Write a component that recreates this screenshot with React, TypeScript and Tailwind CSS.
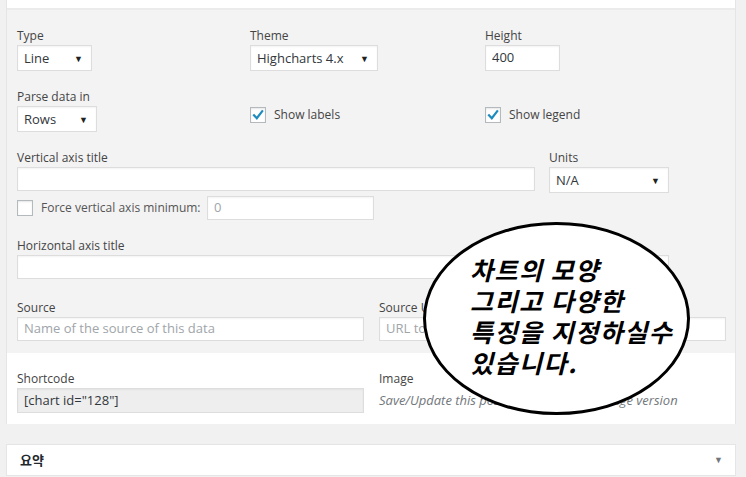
import React from 'react';

const Arrow = () => <span className="text-[9px] leading-none text-[#222]">▼</span>;

function Label({ children, className = '' }: { children?: React.ReactNode; className?: string }) {
  return <div className={`h-[18px] leading-[18px] text-[12px] text-[#444] ${className}`}>{children}</div>;
}

function Select({ value, w }: { value: string; w: string }) {
  return (
    <div className={`${w} h-[26px] bg-white border border-[#ddd] shadow-[inset_0_1px_2px_rgba(0,0,0,0.05)] flex items-center justify-between pl-[6px] pr-[8px] pt-[1px] text-[13px] text-[#32373c]`}>
      <span>{value}</span>
      <Arrow />
    </div>
  );
}

function Input({ w, value, placeholder, h = 'h-[24px]', bg = 'bg-white' }: { w: string; value?: string; placeholder?: string; h?: string; bg?: string }) {
  return (
    <div className={`${w} ${h} ${bg} border border-[#ddd] shadow-[inset_0_1px_2px_rgba(0,0,0,0.05)] flex items-center px-[6px] text-[13px]`}>
      {value ? <span className="text-[#32373c]">{value}</span> : <span className="text-[#a0a5aa]">{placeholder}</span>}
    </div>
  );
}

function Checkbox({ checked }: { checked?: boolean }) {
  return (
    <div className="w-[16px] h-[16px] shrink-0 bg-white border border-[#b4b9be] shadow-[inset_0_1px_2px_rgba(0,0,0,0.1)] flex items-center justify-center">
      {checked && (
        <svg width="14" height="14" viewBox="0 0 14 14">
          <path d="M3 7.2 L5.8 10.2 L11.2 3.2" fill="none" stroke="#1e8cbe" strokeWidth="2.2" strokeLinecap="square" />
        </svg>
      )}
    </div>
  );
}

export default function App() {
  return (
    <div className="relative w-[746px] h-[477px] overflow-hidden bg-[#f1f1f1] font-['Open_Sans','Liberation_Sans',sans-serif]">
      <div className="ml-[6px] w-[730px] border-x border-[#e5e5e5]">
        <div className="h-[10px] bg-white border-b-2 border-[#ebebeb]" />

        {/* chart settings */}
        <div className="bg-[#f3f3f3] pl-[10px] pt-[17px] pb-[12px] flex flex-col">
          <div className="flex">
            <div className="w-[233px]">
              <Label>Type</Label>
              <Select value="Line" w="w-[75px]" />
            </div>
            <div className="w-[235px]">
              <Label>Theme</Label>
              <Select value="Highcharts 4.x" w="w-[128px]" />
            </div>
            <div>
              <Label>Height</Label>
              <Input w="w-[75px]" h="h-[26px]" value="400" />
            </div>
          </div>

          <div className="flex mt-[17px]">
            <div className="w-[233px]">
              <Label>Parse data in</Label>
              <Select value="Rows" w="w-[80px]" />
            </div>
            <div className="w-[235px] pt-[19px] flex items-start gap-[8px]">
              <Checkbox checked />
              <span className="text-[12px] text-[#444] leading-[16px]">Show labels</span>
            </div>
            <div className="pt-[19px] flex items-start gap-[8px]">
              <Checkbox checked />
              <span className="text-[12px] text-[#444] leading-[16px]">Show legend</span>
            </div>
          </div>

          <div className="flex mt-[17px]">
            <div className="w-[532px]">
              <Label>Vertical axis title</Label>
              <Input w="w-[518px]" />
            </div>
            <div>
              <Label>Units</Label>
              <Select value="N/A" w="w-[120px]" />
            </div>
          </div>

          <div className="flex items-center mt-[3px] h-[24px]">
            <Checkbox />
            <span className="ml-[8px] w-[166px] whitespace-nowrap text-[12px] text-[#555]">Force vertical axis minimum:</span>
            <Input w="w-[167px]" placeholder="0" />
          </div>

          <div className="mt-[17px]">
            <Label>Horizontal axis title</Label>
            <Input w="w-[652px]" />
          </div>

          <div className="flex mt-[20px]">
            <div className="w-[362px]">
              <Label>Source</Label>
              <Input w="w-[347px]" placeholder="Name of the source of this data" />
            </div>
            <div>
              <Label>Source URL</Label>
              <Input w="w-[347px]" placeholder="URL to the source of this data" />
            </div>
          </div>
        </div>

        {/* shortcode */}
        <div className="bg-white pl-[10px] pt-[17px] pb-[11px] flex">
          <div className="w-[362px]">
            <Label>Shortcode</Label>
            <Input w="w-[347px]" h="h-[25px]" bg="bg-[#eeeeee]" value={'[chart id="128"]'} />
          </div>
          <div>
            <Label>Image</Label>
            <div className="mt-[3px] text-[13px] italic text-[#72777c]">Save/Update this post to generate the image version</div>
          </div>
        </div>
      </div>

      {/* 요약 */}
      <div className="ml-[6px] mt-[20px] w-[730px] h-[32px] bg-white border border-[#e5e5e5] flex items-center justify-between pl-[13px] pr-[12px]">
        <span className="text-[13px] font-bold text-[#23282d] font-['Noto_Sans_CJK_KR',sans-serif]">요약</span>
        <span className="text-[9px] text-[#72777c]">▼</span>
      </div>

      {/* callout */}
      <div className="absolute left-[423px] top-[222px] w-[267px] h-[193px] rounded-[50%] bg-white border-[3px] border-black" />
      <div className="absolute left-[470px] top-[254px] text-[25px] leading-[31px] tracking-[1.5px] font-bold italic text-black font-['Noto_Sans_CJK_KR',sans-serif] whitespace-nowrap">
        <div>차트의 모양</div>
        <div>그리고 다양한</div>
        <div>특징을 지정하실수</div>
        <div>있습니다.</div>
      </div>
    </div>
  );
}
